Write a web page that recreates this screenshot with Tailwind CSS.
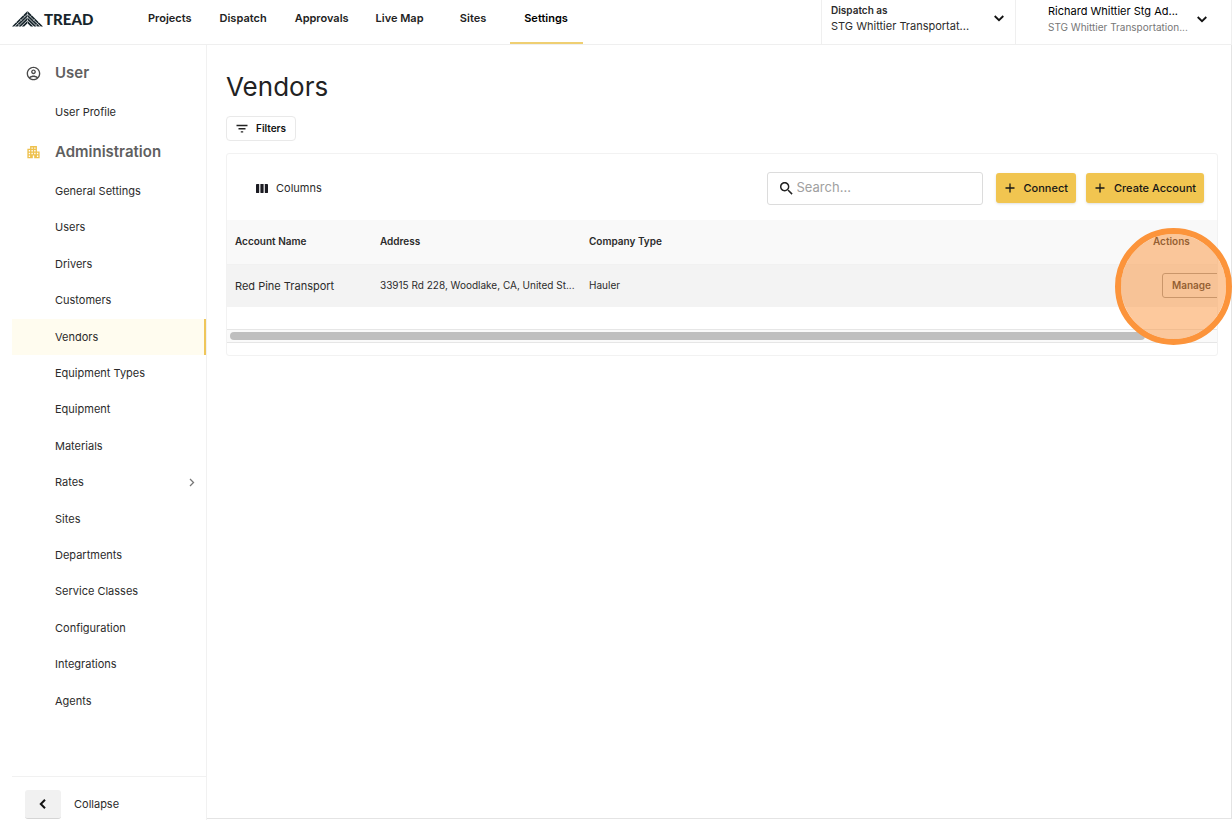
<!DOCTYPE html>
<html lang="en">
<head>
<meta charset="utf-8">
<title>Tread – Vendors</title>
<script src="https://cdn.jsdelivr.net/npm/@tailwindcss/browser@4"></script>
</head>
<body class="flex min-h-screen flex-col overflow-x-hidden bg-white font-['Inter',sans-serif] text-[11px] text-[#2b2b2b]">
<header class="flex h-[45px] shrink-0 items-stretch border-b border-[#efefef]">
  <a href="#" class="flex w-[134px] items-center pb-[7px] pl-3 font-['Lato',sans-serif] text-[15px] leading-4 font-black text-[#17252c]" aria-label="Tread home">
    <svg class="h-4 w-[31px]" viewBox="0 0 31 16" fill="#17252c">
      <path d="M15.500 0 31 15.500H28.800L15.500 2.700 2.200 15.500H0z"/>
      <path d="M15.500 3.400 28 15.500H25.500L15.500 5.800 5.500 15.500H3z"/>
      <path d="M15.500 6.600 24.600 15.500H22.200L15.500 9 8.800 15.500H6.400z"/>
      <path d="M15.500 9.800 21.300 15.500H18.800L15.500 12.200 12.200 15.500H9.700z"/>
      <path d="M15.500 0 15.500 13M11 4l2 2M20 4l-2 2M7.500 7.500l2.500 2.500M23.500 7.500 21 10M4 11l3 3M27 11l-3 3" stroke="#fff" stroke-width=".4"/>
    </svg>
    <span class="ml-px">TREAD</span>
  </a>
  <nav class="flex font-semibold text-[#222]" aria-label="Main">
    <a href="#" class="flex items-center px-[14px] pb-[7px]">Projects</a>
    <a href="#" class="flex items-center px-[14px] pb-[7px]">Dispatch</a>
    <a href="#" class="flex items-center px-[14px] pb-[7px]">Approvals</a>
    <a href="#" class="flex items-center px-[13px] pb-[7px]">Live Map</a>
    <a href="#" class="flex w-[73px] items-center justify-center pb-[7px]">Sites</a>
    <a href="#" class="flex w-[73px] items-center justify-center border-b-2 border-[#efcf72] pt-[2px] pb-[7px] text-black" aria-current="page">Settings</a>
  </nav>
  <button class="ml-auto flex w-[194px] items-center justify-between border-l border-[#efefef] pr-[10px] pb-2 pl-[9px] text-left">
    <span class="min-w-0">
      <span class="block text-[10px] leading-4 font-semibold">Dispatch as</span>
      <span class="block leading-4">STG Whittier Transportat...</span>
    </span>
    <svg class="size-3 shrink-0" viewBox="0 0 12 12" fill="none" stroke="#111" stroke-width="1.8"><path d="M1.700 4 6 8.200 10.300 4"/></svg>
  </button>
  <button class="flex w-[217px] items-center justify-between border-x border-[#efefef] pr-[23px] pb-[7px] pl-8 text-left">
    <span class="min-w-0">
      <span class="block leading-4 text-black">Richard Whittier Stg Ad...</span>
      <span class="block text-[10px] leading-4 text-[#777]">STG Whittier Transportation...</span>
    </span>
    <svg class="size-3 shrink-0" viewBox="0 0 12 12" fill="none" stroke="#111" stroke-width="1.8"><path d="M1.700 4 6 8.200 10.300 4"/></svg>
  </button>
</header>

<div class="flex flex-1">
  <aside class="flex w-[207px] shrink-0 flex-col border-r border-[#f1f1f1] pl-3">
    <nav aria-label="Settings">
      <h2 class="mt-2 flex h-10 items-center gap-[14px] pl-[14px] text-[15px] font-semibold text-[#5f5f5f]">
        <svg class="size-[15px]" viewBox="1 1 22 22" fill="#4a4a4a"><path d="M12 2C6.480 2 2 6.480 2 12s4.480 10 10 10 10-4.480 10-10S17.520 2 12 2zM7.350 18.500C8.660 17.560 10.260 17 12 17s3.340.56 4.650 1.500C15.340 19.440 13.740 20 12 20s-3.340-.56-4.650-1.500zm10.790-1.380C16.450 15.800 14.320 15 12 15s-4.450.8-6.140 2.120C4.700 15.730 4 13.950 4 12c0-4.420 3.580-8 8-8s8 3.580 8 8c0 1.950-.7 3.730-1.860 5.120zM12 6c-1.930 0-3.500 1.570-3.500 3.500S10.070 13 12 13s3.500-1.570 3.500-3.500S13.930 6 12 6zm0 5c-.83 0-1.500-.67-1.500-1.500S11.170 8 12 8s1.500.67 1.500 1.500S12.830 11 12 11z"/></svg>User
      </h2>
      <a href="#" class="flex h-[39px] items-center pl-[43px]">User Profile</a>
      <h2 class="flex h-10 items-center gap-[14px] pl-[14px] text-[15px] font-semibold text-[#5f5f5f]">
        <svg class="size-[15px]" viewBox="1 2 22 21" fill="#eec14d"><path fill-rule="evenodd" d="M17 11V3H7v4H3v14h8v-4h2v4h8V11h-4zM7 19H5v-2h2v2zm0-4H5v-2h2v2zm0-4H5V9h2v2zm4 4H9v-2h2v2zm0-4H9V9h2v2zm0-4H9V5h2v2zm4 8h-2v-2h2v2zm0-4h-2V9h2v2zm0-4h-2V5h2v2zm4 12h-2v-2h2v2zm0-4h-2v-2h2v2z"/></svg>Administration
      </h2>
      <div class="mt-px grid h-[546px] auto-rows-fr">
        <a href="#" class="flex items-center pl-[43px]">General Settings</a>
        <a href="#" class="flex items-center pl-[43px]">Users</a>
        <a href="#" class="flex items-center pl-[43px]">Drivers</a>
        <a href="#" class="flex items-center pl-[43px]">Customers</a>
        <a href="#" class="flex items-center border-r-2 border-[#efc65a] bg-[#fffcef] pl-[43px]" aria-current="page">Vendors</a>
        <a href="#" class="flex items-center pl-[43px]">Equipment Types</a>
        <a href="#" class="flex items-center pl-[43px]">Equipment</a>
        <a href="#" class="flex items-center pl-[43px]">Materials</a>
        <a href="#" class="flex items-center justify-between pr-[9px] pl-[43px]">Rates
          <svg class="size-[10px]" viewBox="0 0 10 10" fill="none" stroke="#777" stroke-width="1.3"><path d="M3 2l3.500 3.500L3 9"/></svg></a>
        <a href="#" class="flex items-center pl-[43px]">Sites</a>
        <a href="#" class="flex items-center pl-[43px]">Departments</a>
        <a href="#" class="flex items-center pl-[43px]">Service Classes</a>
        <a href="#" class="flex items-center pl-[43px]">Configuration</a>
        <a href="#" class="flex items-center pl-[43px]">Integrations</a>
        <a href="#" class="flex items-center pl-[43px]">Agents</a>
      </div>
    </nav>
    <div class="mt-auto flex h-11 items-end border-t border-[#f1f1f1] pb-px pl-[13px]">
      <button id="collapse" aria-label="Collapse sidebar" class="flex h-[29px] w-9 items-center justify-center rounded-[3px] border-b border-[#d5d5d5] bg-[#f1f1f1]">
        <svg class="size-3" viewBox="0 0 12 12" fill="none" stroke="#111" stroke-width="2"><path d="M8 1.800 3.800 6 8 10.200"/></svg>
      </button>
      <label for="collapse" class="flex h-[30px] items-center pl-[13px]">Collapse</label>
    </div>
  </aside>

  <main class="mb-px min-w-0 flex-1 border-r border-b border-[#e4e4e4] pt-6 pr-[13px] pl-[19px]">
    <h1 class="text-[26px] leading-9 text-[#222]">Vendors</h1>
    <button class="mt-[11px] flex h-[25px] items-center gap-2 rounded-[4px] border border-[#e9e9e9] px-[9px] text-[10px] font-semibold text-[#111]">
      <svg class="h-[9px] w-3" viewBox="0 0 12 9" fill="none" stroke="#222" stroke-width="1.400"><path d="M0.500 1.500h11M2.500 4.700h7M4.800 7.900h2.400"/></svg>Filters
    </button>

    <section class="relative mt-3">
      <div class="overflow-hidden rounded-[3px] border border-[#f2f2f2]">
        <div class="flex h-[66px] items-center pt-[2px] pr-[13px] pl-[29px]">
          <button class="flex items-center gap-2">
            <svg class="h-[9px] w-3" viewBox="0 0 12 9" fill="#1b1b22"><rect width="3.200" height="9" rx=".4"/><rect x="4.400" width="3.200" height="9" rx=".4"/><rect x="8.800" width="3.200" height="9" rx=".4"/></svg>Columns
          </button>
          <label class="ml-auto flex h-[33px] w-[216px] items-center gap-1 rounded-[3px] border border-[#dcdcdc] pl-3">
            <svg class="size-[13px] shrink-0" viewBox="3 3 18 18" fill="#222"><path d="M15.500 14h-.79l-.28-.27C15.410 12.590 16 11.110 16 9.500 16 5.910 13.090 3 9.500 3S3 5.910 3 9.500 5.910 16 9.500 16c1.610 0 3.090-.59 4.230-1.570l.27.28v.79l5 4.990L20.490 19l-4.990-5zm-6 0C7.010 14 5 11.990 5 9.500S7.010 5 9.500 5 14 7.010 14 9.500 11.990 14 9.500 14z"/></svg>
            <input type="search" aria-label="Search" placeholder="Search..." class="w-full min-w-0 text-[13px] outline-none placeholder:text-[#a0a0a0]">
          </label>
          <button class="ml-[13px] flex h-[30px] items-center gap-2 rounded-[3px] bg-[#f1c550] px-2 font-medium text-[#161616] shadow-sm">
            <svg class="size-3" viewBox="0 0 12 12" stroke="#161616" stroke-width="1.300"><path d="M6 1.500v9M1.500 6h9"/></svg>Connect
          </button>
          <button class="ml-[10px] flex h-[30px] items-center gap-2 rounded-[3px] bg-[#f1c550] px-2 font-medium text-[#161616] shadow-sm">
            <svg class="size-3" viewBox="0 0 12 12" stroke="#161616" stroke-width="1.300"><path d="M6 1.500v9M1.500 6h9"/></svg>Create Account
          </button>
        </div>
        <table class="w-full table-fixed text-left text-[10px]">
          <thead class="bg-[#f9f9f9]">
            <tr class="h-11 border-b border-[#f1f1f1]">
              <th class="w-[145px] pl-2 font-semibold">Account Name</th>
              <th class="w-[209px] pl-2 font-semibold">Address</th>
              <th class="pl-2 font-semibold">Company Type</th>
              <th class="w-[73px] pl-[9px] font-semibold">Actions</th>
            </tr>
          </thead>
          <tbody>
            <tr class="h-[43px] bg-[#f3f3f3]">
              <td class="pl-2 text-[11px]">Red Pine Transport</td>
              <td class="truncate pl-2">33915 Rd 228, Woodlake, CA, United St...</td>
              <td class="pl-2">Hauler</td>
              <td class="pl-[18px]"><button class="flex h-[25px] w-[58px] items-center rounded-[3px] border border-[#999] pl-[9px] font-semibold">Manage</button></td>
            </tr>
          </tbody>
        </table>
        <div class="mt-[22px] mb-3 border-y border-[#e6e6e6] bg-[#fafafa] px-[3px] py-[2px]">
          <div class="h-2 w-[93%] rounded-full bg-[#bfbfbf]"></div>
        </div>
      </div>
      <div class="pointer-events-none absolute top-[75px] -right-[14px] size-[117px] rounded-full border-[6px] border-[#fc943b] bg-[#fc943b]/50 bg-clip-padding"></div>
    </section>
  </main>
</div>
</body>
</html>
